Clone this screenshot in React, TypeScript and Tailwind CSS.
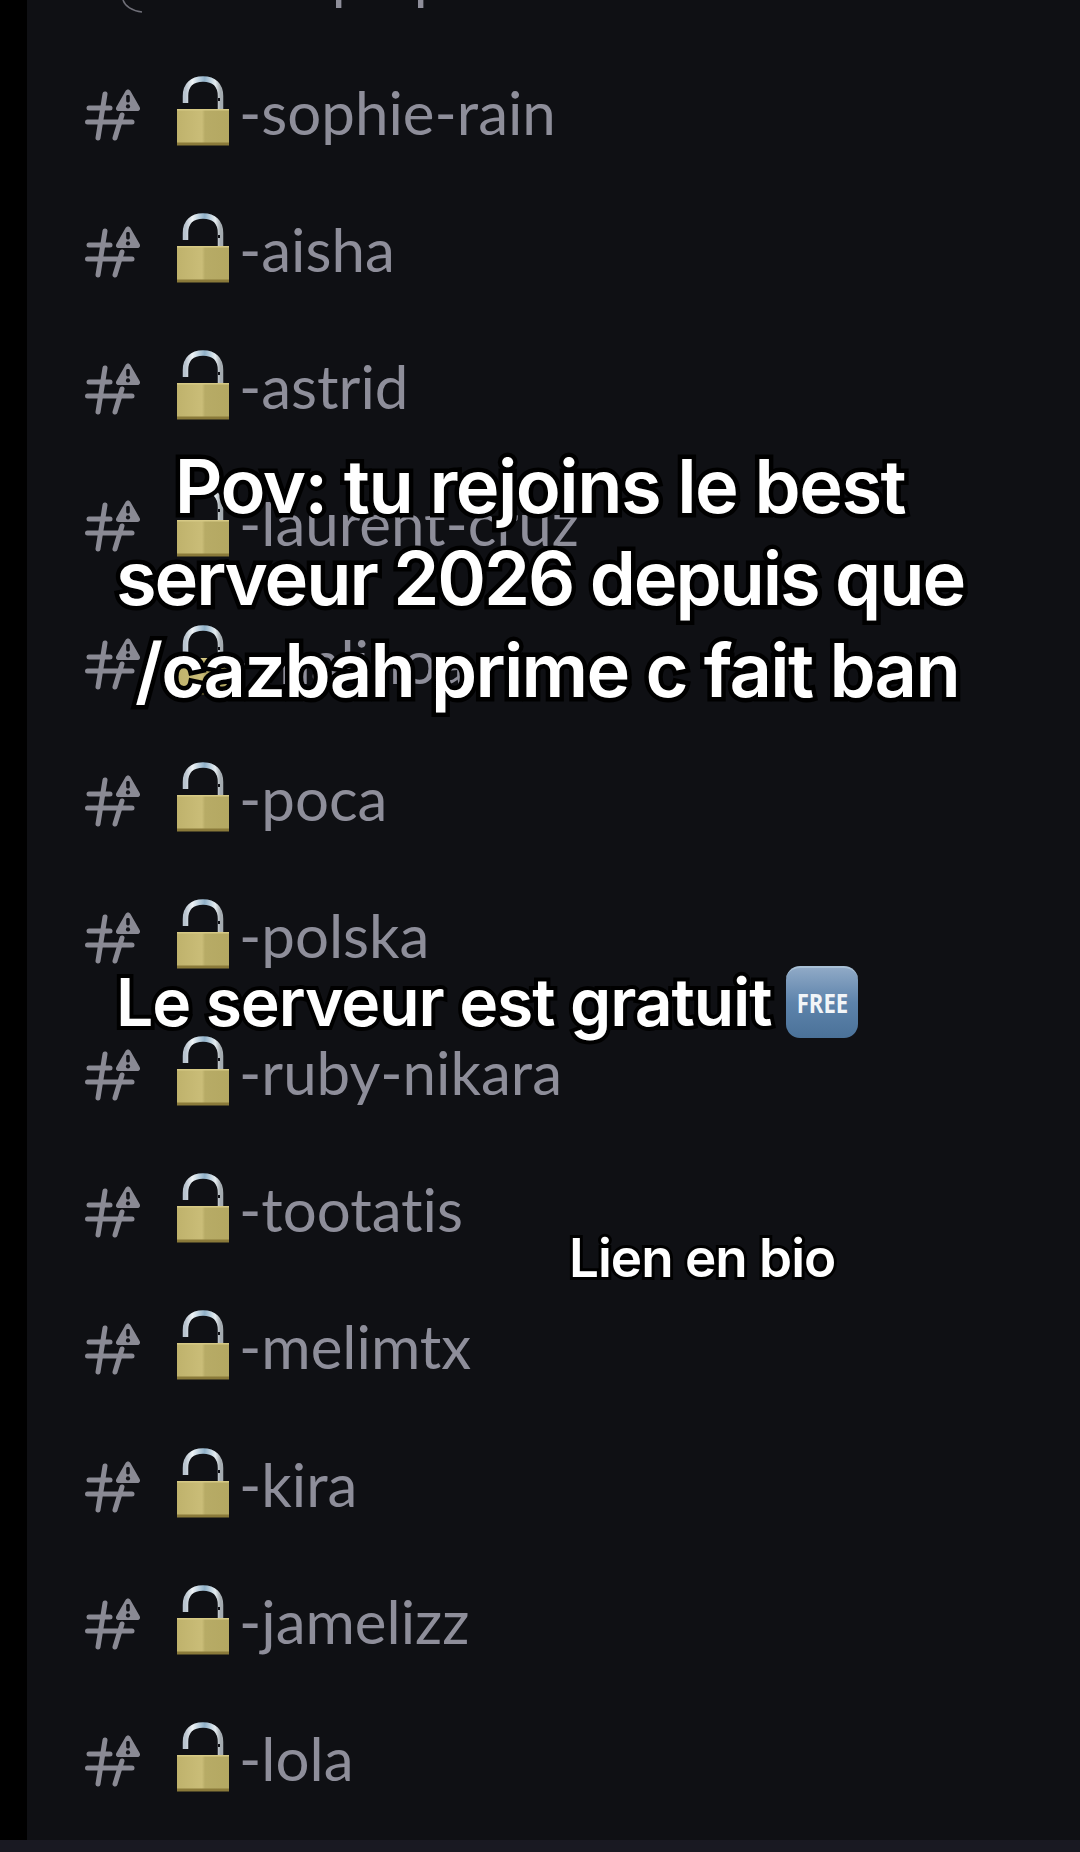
const channels = [
  "-sophie-rain",
  "-aisha",
  "-astrid",
  "-laurent-cruz",
  "-malinoa",
  "-poca",
  "-polska",
  "-ruby-nikara",
  "-tootatis",
  "-melimtx",
  "-kira",
  "-jamelizz",
  "-lola",
];

function HashIcon() {
  return (
    <svg width="56" height="54" viewBox="0 0 56 54" className="shrink-0">
      <g stroke="#8a8a94" strokeWidth="5" strokeLinecap="round" fill="none">
        <path d="M20 6 L13 50" />
        <path d="M37 27 L30 50" />
        <path d="M4 20 H25" />
        <path d="M2.5 34 H47" />
      </g>
      <path
        d="M43 1.5 C44 1.5 45 2.2 45.6 3.2 L54.6 19 C55.8 21 54.5 23 52.4 23 H33.6 C31.5 23 30.2 21 31.4 19 L40.4 3.2 C41 2.2 42 1.5 43 1.5 Z"
        fill="#8a8a94"
      />
      <rect x="41.2" y="7" width="3.6" height="7.5" rx="1.4" fill="#101116" />
      <circle cx="43" cy="18.4" r="2.1" fill="#101116" />
    </svg>
  );
}

function OpenLock() {
  return (
    <svg width="52" height="70" viewBox="0 0 52 70" className="shrink-0">
      <defs>
        <linearGradient id="shackle" x1="0" y1="0" x2="1" y2="0">
          <stop offset="0" stopColor="#b9c4cf" />
          <stop offset="0.2" stopColor="#eef3f6" />
          <stop offset="0.55" stopColor="#8fb0c8" />
          <stop offset="0.85" stopColor="#e6edf1" />
          <stop offset="1" stopColor="#a4abb0" />
        </linearGradient>
        <linearGradient id="brass" x1="0" y1="0" x2="1" y2="0">
          <stop offset="0" stopColor="#bfb26c" />
          <stop offset="0.48" stopColor="#cabd78" />
          <stop offset="0.54" stopColor="#b7ab66" />
          <stop offset="1" stopColor="#b4a862" />
        </linearGradient>
      </defs>
      <path
        d="M8.5 27 L8.5 20 C8.5 9 15 3 26 3 C37 3 43.5 9 43.5 20 L43.5 34"
        fill="none"
        stroke="url(#shackle)"
        strokeWidth="5.5"
      />
      <rect x="41" y="22" width="2" height="3" fill="#101116" />
      <rect x="0" y="33" width="52" height="36" fill="url(#brass)" />
      <rect x="0" y="33" width="52" height="1.5" fill="#d6c985" />
      <rect x="0" y="66.5" width="52" height="3" fill="#8a7a3a" />
    </svg>
  );
}

function ChannelName({ name }: { name: string }) {
  return (
    <span className="ml-[10px] -mt-[6px] font-['Lato',sans-serif] text-[60px] leading-none text-[#8e8e9a] [font-variant-ligatures:none]">
      {name}
    </span>
  );
}

function ChannelRow({ name }: { name: string }) {
  return (
    <div className="flex h-[137.2px] items-center pl-[58px]">
      <HashIcon />
      <div className="ml-[36px] -mt-[8px]">
        <OpenLock />
      </div>
      <ChannelName name={name} />
    </div>
  );
}

export default function App() {
  return (
    <div className="relative h-[1852px] w-[1080px] overflow-hidden bg-black">
      <div className="ml-[27px] h-[1840px] overflow-hidden bg-[#0f1014]">
        <div className="-mt-[91px]">
          {/* row cut off by the top of the screen, only its descenders show */}
          <div className="flex h-[137.2px] items-center pl-[205px]">
            <ChannelName name="-onpoip" />
          </div>
          {channels.map((name) => (
            <ChannelRow key={name} name={name} />
          ))}
        </div>
      </div>
      <div className="h-[12px] bg-[#191922]" />

      <svg width="24" height="14" viewBox="0 0 24 14" className="absolute left-[120px] top-0">
        <path d="M3 0 C5 6 12 11 22 12" fill="none" stroke="#6f6f78" strokeWidth="1.5" />
      </svg>

      <div className="absolute left-0 top-[440px] w-[1080px] text-center font-['Inter',sans-serif] text-[74px] font-semibold leading-[92px] text-white [-webkit-text-stroke:9px_#000] [paint-order:stroke_fill]">
        <p className="tracking-[-1.5px]">Pov: tu rejoins le best</p>
        <p className="tracking-[-2.1px]">serveur 2026 depuis que</p>
        <p className="pl-[14px] tracking-[-1.7px]">/cazbah prime c fait ban</p>
      </div>

      <div className="absolute left-[116px] top-[966px] flex items-center gap-[15px]">
        <span className="font-['Inter',sans-serif] text-[66px] font-semibold leading-[72px] tracking-[-1.1px] text-white [-webkit-text-stroke:8px_#000] [paint-order:stroke_fill]">
          Le serveur est gratuit
        </span>
        <span className="flex h-[72px] w-[72px] items-center justify-center rounded-[14px] border-t-2 border-[#a8c0d6] bg-gradient-to-b from-[#8fa9c6] via-[#5d83ab] to-[#4b7299] font-['Open_Sans',sans-serif] text-[27px] font-bold text-[#f2f5f8]">
          <span className="scale-x-[0.82]">FREE</span>
        </span>
      </div>

      <div className="absolute left-[569px] top-[1228px] font-['Inter',sans-serif] text-[53px] font-semibold leading-[60px] tracking-[-1px] text-white [-webkit-text-stroke:6px_#000] [paint-order:stroke_fill]">
        Lien en bio
      </div>
    </div>
  );
}
